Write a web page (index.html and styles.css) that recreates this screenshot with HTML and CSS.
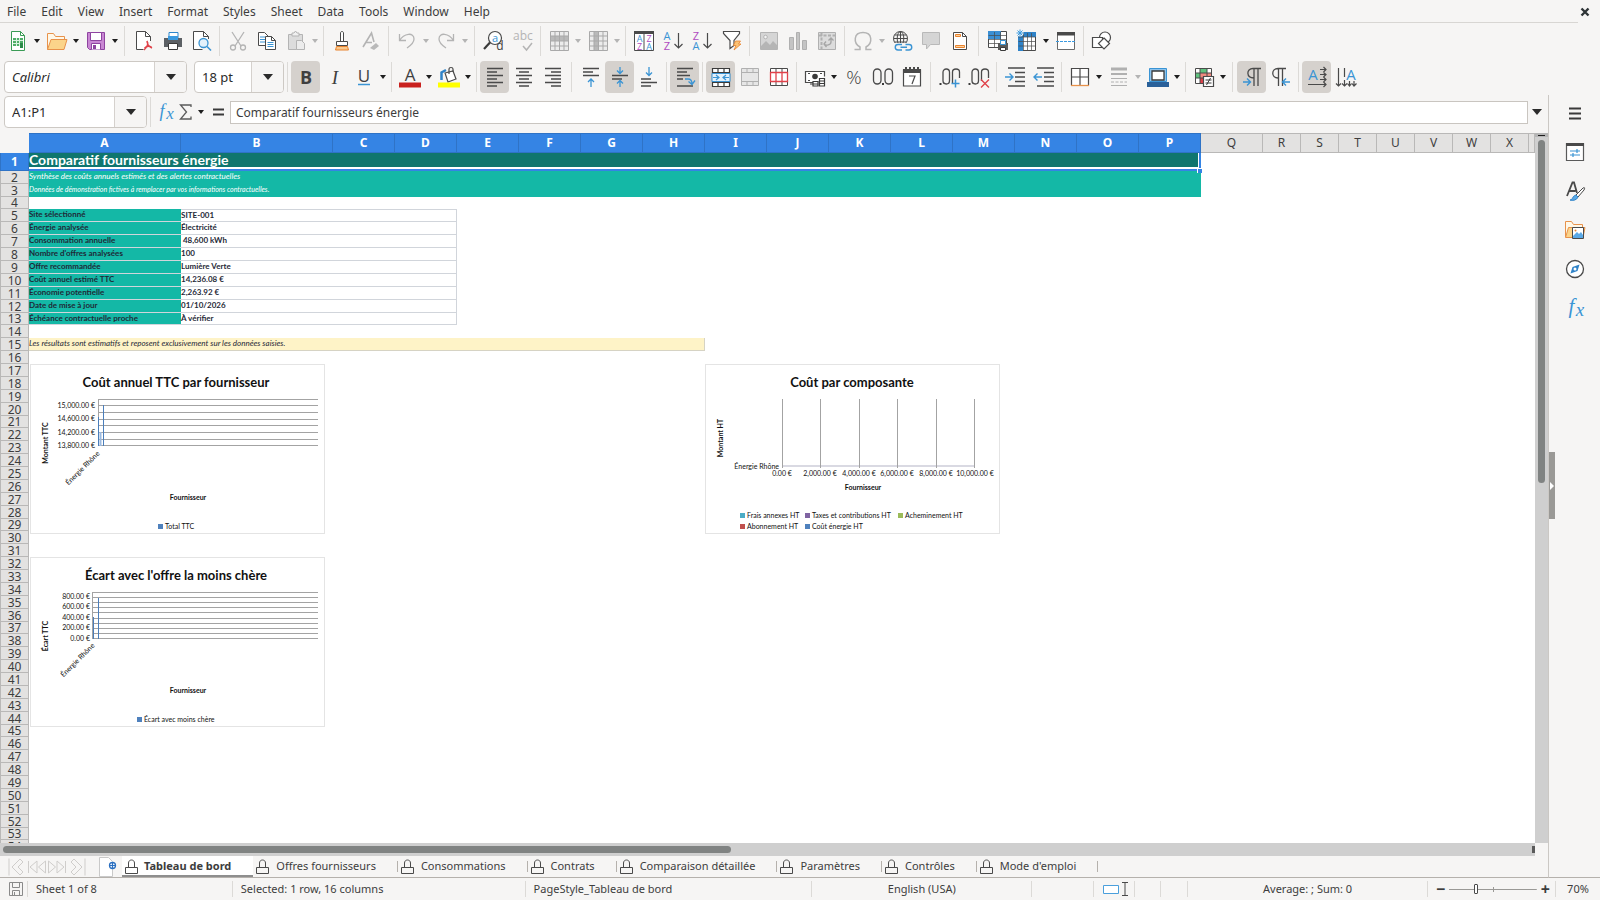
FILE: index.html
```html
<!DOCTYPE html>
<html lang="fr">
<head>
<meta charset="utf-8">
<title>Comparatif fournisseurs énergie</title>
<link rel="stylesheet" href="styles.css">
</head>
<body>
<header class="menubar">
  <nav class="menus">
    <button>File</button><button>Edit</button><button>View</button><button>Insert</button><button>Format</button><button>Styles</button><button>Sheet</button><button>Data</button><button>Tools</button><button>Window</button><button>Help</button>
  </nav>
  <button class="close" aria-label="Close document"><svg width="10" height="10" viewBox="0 0 10 10"><path d="M1.500 1.500l7 7M8.500 1.500l-7 7" stroke="#2e3436" stroke-width="2.400"/></svg></button>
</header>

<div class="toolbar" role="toolbar" aria-label="Standard">
  <button class="tb" aria-label="New"><svg viewBox="0 0 24 24"><path d="M5.500 2.500h9l4 4v15h-13z" fill="#fff" stroke="#3a9b55"/><path d="M14.500 2.500v4h4" fill="none" stroke="#3a9b55"/><path d="M7 9h10v8H7z" fill="#4fae68"/><path d="M7 11.500h10M7 14.500h10M10.500 9v8M13.500 9v8" stroke="#d9f2df"/><path d="M14 14h3v5h-3z" fill="#2b8a48"/></svg></button><button class="dd" aria-label="New options"></button>
  <button class="tb" aria-label="Open"><svg viewBox="0 0 24 24"><path d="M2.500 20.500V4.500h6l2 3h9v3" fill="#fff8e8" stroke="#e8924a"/><path d="M2.500 20.500l3.500-10h16l-3 10z" fill="#fbd48a" stroke="#e8924a"/></svg></button><button class="dd" aria-label="Open options"></button>
  <button class="tb" aria-label="Save"><svg viewBox="0 0 24 24"><path d="M3.500 3.500h17v17h-15l-2-2z" fill="#c987d3" stroke="#8e44a0"/><path d="M6.500 3.500h11v8h-11z" fill="#fff" stroke="#8e44a0"/><path d="M7.500 20.500v-6h9v6" fill="#fff" stroke="#8e44a0"/><path d="M9 16h3v4H9z" fill="#8e44a0"/></svg></button><button class="dd" aria-label="Save options"></button>
  <i class="sep wide"></i>
  <button class="tb" aria-label="Export as PDF"><svg viewBox="0 0 24 24"><path d="M18.500 12V7.500l-5-5h-9v18h7" fill="#fff" stroke="#4a4a4a"/><path d="M13.500 2.500v5h5" fill="none" stroke="#4a4a4a"/><path d="M15 12c2 3-1 7-3 9M15 12c0 4 3 6 5 7M12.500 19c2-2 5-2 7-1" fill="none" stroke="#e0424a" stroke-width="1.400"/></svg></button>
  <button class="tb" aria-label="Print"><svg viewBox="0 0 24 24"><path d="M8 10V3.500h9V10" fill="#fff" stroke="#2f87cc"/><path d="M3 9h18v9H3z" fill="#5c6064"/><path d="M7 7h10v4H7z" fill="#3b9ae0"/><path d="M7.500 14.500h9v6h-9z" fill="#fff" stroke="#3a3a3a"/></svg></button>
  <button class="tb" aria-label="Print preview"><svg viewBox="0 0 24 24"><path d="M18.500 10V7.500l-5-5h-10v18h9" fill="#fff" stroke="#4a4a4a"/><path d="M13.500 2.500v5h5" fill="none" stroke="#4a4a4a"/><circle cx="13.500" cy="14" r="4.500" fill="#e4f1fb" stroke="#3a94d4" stroke-width="1.300"/><path d="M17 17.500l4 4" stroke="#3a94d4" stroke-width="1.600"/></svg></button>
  <i class="sep"></i>
  <button class="tb off" aria-label="Cut"><svg viewBox="0 0 24 24"><g fill="none" stroke="#b4b4b4" stroke-width="1.300"><path d="M6 3l9 14M18 3L9 17"/><circle cx="7" cy="18.500" r="2.500"/><circle cx="17" cy="18.500" r="2.500"/></g></svg></button>
  <button class="tb" aria-label="Copy"><svg viewBox="0 0 24 24"><path d="M3.500 3.500h6l4 4v9h-10z" fill="#fff" stroke="#4a4a4a"/><path d="M5 8h5M5 10.500h5M5 13h5" stroke="#3a94d4"/><path d="M10.500 7.500h6l4 4v9h-10z" fill="#fff" stroke="#4a4a4a"/><path d="M16.500 7.500v4h4" fill="none" stroke="#4a4a4a"/><path d="M12.500 13.500h6M12.500 15.500h6M12.500 17.500h6" stroke="#3a94d4"/></svg></button>
  <button class="tb off" aria-label="Paste"><svg viewBox="0 0 24 24"><path d="M4.500 5.500h14v15h-14z" fill="#dcdcdc" stroke="#b4b4b4"/><path d="M8 7V4h2l1.500-2L13 4h2v3z" fill="#f0f0f0" stroke="#b4b4b4"/><path d="M12.500 11.500h5l3 3v6h-8z" fill="#ececec" stroke="#b4b4b4"/></svg></button><button class="dd off" aria-label="Paste options"></button>
  <i class="sep"></i>
  <button class="tb" aria-label="Clone formatting"><svg viewBox="0 0 24 24"><path d="M10.500 12V4c0-2 3-2 3 0v8" fill="#fff" stroke="#4a4a4a"/><path d="M6.500 12.500h11v4h-11z" fill="#fff" stroke="#4a4a4a"/><path d="M6.500 17.500h11l1 3.500h-13z" fill="#fbc98c" stroke="#e8832f"/></svg></button>
  <button class="tb off" aria-label="Clear formatting"><svg viewBox="0 0 24 24"><path d="M4 18L12.500 4l2.500 9M7 13.500h6" fill="none" stroke="#b4b4b4" stroke-width="1.600"/><path d="M11 19l6-5 3 3-5 4z" fill="#b9b9b9"/></svg></button>
  <i class="sep"></i>
  <button class="tb off" aria-label="Undo"><svg viewBox="0 0 24 24"><path d="M4.500 5v6.500H11M4.500 11.500C9 4 19 3 19 10c0 4-4 7-7 9" fill="none" stroke="#b4b4b4" stroke-width="1.300"/></svg></button><button class="dd off" aria-label="Undo list"></button>
  <button class="tb off" aria-label="Redo"><svg viewBox="0 0 24 24"><path d="M19.500 5v6.500H13M19.500 11.500C15 4 5 3 5 10c0 4 4 7 7 9" fill="none" stroke="#b4b4b4" stroke-width="1.300"/></svg></button><button class="dd off" aria-label="Redo list"></button>
  <i class="sep wide"></i>
  <button class="tb" aria-label="Find and replace"><svg viewBox="0 0 24 24"><circle cx="13" cy="9" r="6.500" fill="#fff" stroke="#4a4a4a" stroke-width="1.200"/><path d="M8 13.500L2 20" stroke="#3a3a3a" stroke-width="2.200"/><text x="13" y="13" class="gl blue" font-size="11">a</text><text x="18" y="21" class="gl b" font-size="12">d</text></svg></button>
  <button class="tb off" aria-label="Spelling"><svg viewBox="0 0 24 24"><text x="12" y="11" class="gl grey" font-size="12">abc</text><path d="M12 17l3.500 4L21 14" fill="none" stroke="#b4b4b4" stroke-width="1.500"/></svg></button>
  <i class="sep"></i>
  <button class="tb off" aria-label="Row"><svg viewBox="0 0 24 24"><path d="M3.500 2.500h18v19h-18z" fill="#ececec" stroke="#a9a9a9"/><path d="M4 7h17v5H4z" fill="#b9b9b9"/><path d="M3.500 7h18M3.500 12h18M3.500 17h18M8 3v18M12.500 3v18M17 3v18" stroke="#a9a9a9"/></svg></button><button class="dd off" aria-label="Row options"></button>
  <button class="tb off" aria-label="Column"><svg viewBox="0 0 24 24"><path d="M3.500 2.500h18v19h-18z" fill="#ececec" stroke="#a9a9a9"/><path d="M8 3h5v18H8z" fill="#b9b9b9"/><path d="M3.500 7h18M3.500 12h18M3.500 17h18M8 3v18M12.500 3v18M17 3v18" stroke="#a9a9a9"/></svg></button><button class="dd off" aria-label="Column options"></button>
  <i class="sep"></i>
  <button class="tb" aria-label="Sort"><svg viewBox="0 0 24 24"><path d="M2.500 3v18.500h19V3M12 4v17" fill="#fff" stroke="#4a4a4a"/><path d="M2 2h20v3H2z" fill="#4a4a4a"/><text x="7.500" y="12.500" class="gl blue" font-size="9">A</text><text x="7.500" y="20.500" class="gl pur" font-size="9">Z</text><text x="17" y="12.500" class="gl pur" font-size="9">Z</text><text x="17" y="20.500" class="gl blue" font-size="9">A</text></svg></button>
  <button class="tb" aria-label="Sort ascending"><svg viewBox="0 0 24 24"><text x="6" y="11" class="gl blue" font-size="11">A</text><text x="6" y="21" class="gl pur" font-size="11">Z</text><path d="M17.500 4v15M13.500 15l4 4 4-4" fill="none" stroke="#4a4a4a" stroke-width="1.200"/></svg></button>
  <button class="tb" aria-label="Sort descending"><svg viewBox="0 0 24 24"><text x="6" y="11" class="gl pur" font-size="11">Z</text><text x="6" y="21" class="gl blue" font-size="11">A</text><path d="M17.500 4v15M13.500 15l4 4 4-4" fill="none" stroke="#4a4a4a" stroke-width="1.200"/></svg></button>
  <button class="tb" aria-label="AutoFilter"><svg viewBox="0 0 24 24"><path d="M4.500 2.500h16v2l-5.500 7v5l-4 3v-8l-6.500-7z" fill="#fff" stroke="#4a4a4a" stroke-width="1.200"/><path d="M16.500 12h5l-2 3h2.500l-7 6 2-4.500h-2.500z" fill="#fbc274" stroke="#e8832f" stroke-width=".8"/></svg></button>
  <i class="sep wide"></i>
  <button class="tb off" aria-label="Insert image"><svg viewBox="0 0 24 24"><path d="M3.500 3.500h17v17h-17z" fill="#d5d5d5" stroke="#b4b4b4"/><circle cx="8.500" cy="8" r="1.800" fill="#f4f4f4" stroke="#b4b4b4"/><path d="M4 17l5-5 4 4 3-4 5 5v3H4z" fill="#b5b5b5"/></svg></button>
  <button class="tb off" aria-label="Insert chart"><svg viewBox="0 0 24 24"><g fill="#c4c4c4" stroke="#b0b0b0"><path d="M3.500 8.500h4v12h-4zM10.500 3.500h3v17h-3zM16.500 11.500h4v9h-4z"/></g></svg></button>
  <button class="tb off" aria-label="Insert pivot table"><svg viewBox="0 0 24 24"><path d="M3.500 3.500h17v17h-17z" fill="#dcdcdc" stroke="#b0b0b0"/><path d="M4 6.500h16M6.500 4v16" stroke="#b0b0b0" stroke-dasharray="3 1.500" stroke-width="2"/><path d="M16 9v4c0 3-5 4-7 2M13.500 11.500L16 9l2.500 2.500M11 12.500L9 15l2.500 3" fill="none" stroke="#a5a5a5" stroke-width="1.300"/></svg></button>
  <i class="sep"></i>
  <button class="tb off" aria-label="Special character"><svg viewBox="0 0 24 24"><path d="M3.500 20.500h5.500v-2.500C2 14 2.500 3.500 12 3.500S22 14 15 18v2.500h5.500" fill="none" stroke="#b4b4b4" stroke-width="1.500"/></svg></button><button class="dd off" aria-label="Special character options"></button>
  <button class="tb" aria-label="Hyperlink"><svg viewBox="0 0 24 24"><g fill="none" stroke="#4a4a4a"><circle cx="10.500" cy="9.500" r="7"/><ellipse cx="10.500" cy="9.500" rx="3.300" ry="7"/><path d="M3.500 9.500h14M4.500 6h12M4.500 13h12M10.500 2.500v14"/></g><path d="M5 14h18v8H5z" fill="#f6f5f4"/><g fill="none" stroke="#3a94d4" stroke-width="1.400"><path d="M12 15.500H8a2.500 2.500 0 000 5.500h4M15.500 15.500H19a2.500 2.500 0 010 5.500h-3.500M10.500 18.300h6.500"/></g></svg></button>
  <button class="tb off" aria-label="Comment"><svg viewBox="0 0 24 24"><path d="M3.500 3.500h17v12h-9l-4 4.500v-4.500h-4z" fill="#d5d5d5" stroke="#b9b9b9"/></svg></button>
  <button class="tb" aria-label="Headers and footers"><svg viewBox="0 0 24 24"><path d="M5.500 3.500h9l4 4v13h-13z" fill="#fff" stroke="#4a4a4a"/><path d="M14.500 3.500v4h4" fill="none" stroke="#4a4a4a"/><path d="M7.500 5.500h5v2h-5zM7.500 16.500h9v2h-9z" fill="#fbd3a0" stroke="#e8832f"/></svg></button>
  <i class="sep wide"></i>
  <button class="tb" aria-label="Print area"><svg viewBox="0 0 24 24"><path d="M2.500 2.500h18v16h-18z" fill="#fff" stroke="#4a4a4a"/><path d="M2 2h13v8H2z" fill="#3b8fd4"/><path d="M2.500 6.500h18M2.500 10.500h18M2.500 14.500h18M8.500 3v15M14.500 3v15" stroke="#4a4a4a" stroke-opacity=".7"/><path d="M12 14h10v7H12z" fill="#5a5a5a"/><path d="M14.500 11.500h5v4h-5z" fill="#fff" stroke="#3a94d4"/><path d="M14.500 18.500h5v3h-5z" fill="#fff" stroke="#3a3a3a"/></svg></button>
  <button class="tb" aria-label="Freeze rows and columns"><svg viewBox="0 0 24 24"><path d="M3.500 3.500h17v18h-17z" fill="#fff" stroke="#4a4a4a"/><path d="M3 3h18v5H3zM3 3h5v19H3z" fill="#2f83c8"/><path d="M3.500 8h17M3.500 12.500h17M3.500 17h17M8.500 4v18M12.500 4v18M16.500 4v18" stroke="#4a4a4a" stroke-opacity=".7"/><circle cx="5" cy="4" r="3.500" fill="#f6f5f4"/><path d="M5 .5v7M1.500 4h7M2.500 1.500l5 5M7.500 1.500l-5 5" stroke="#3b9ae0"/></svg></button><button class="dd" aria-label="Freeze options"></button>
  <button class="tb" aria-label="Split window"><svg viewBox="0 0 24 24"><path d="M3.500 3.500h17v17h-17z" fill="#fff" stroke="#6a6a6a"/><path d="M3 3h18v3.500H3z" fill="#4a4a4a"/><path d="M2 12.500h20" stroke="#3b9ae0" stroke-width="1.200" stroke-dasharray="3 1"/></svg></button>
  <i class="sep"></i>
  <button class="tb" aria-label="Show draw functions"><svg viewBox="0 0 24 24"><g fill="#fff" stroke="#4a4a4a" stroke-width="1.200"><circle cx="15" cy="8.500" r="5.500"/><path d="M2.500 8.500h10v10h-10z"/><path d="M14 9l5.500 5.500L14 20l-5.500-5.500z"/></g></svg></button>
</div>

<div class="toolbar format" role="toolbar" aria-label="Formatting">
  <div class="combo font"><input type="text" aria-label="Font name" value="Calibri"><button aria-label="Font list"></button></div>
  <div class="combo size"><input type="text" aria-label="Font size" value="18 pt"><button aria-label="Size list"></button></div>
  <i class="sep"></i>
  <button class="tb on" aria-label="Bold"><svg viewBox="0 0 24 24"><text x="12" y="18.500" class="gl bd" font-size="18">B</text></svg></button>
  <button class="tb" aria-label="Italic"><svg viewBox="0 0 24 24"><text x="12" y="18.500" class="gl it" font-size="19">I</text></svg></button>
  <button class="tb" aria-label="Underline"><svg viewBox="0 0 24 24"><text x="12" y="16.500" class="gl" font-size="17">U</text><path d="M6 19.500h12" stroke="#3a94d4" stroke-width="1.500"/></svg></button><button class="dd" aria-label="Underline options"></button>
  <i class="sep"></i>
  <button class="tb" aria-label="Font color"><svg viewBox="0 0 24 24"><text x="12" y="16" class="gl" font-size="17">A</text><path d="M1 17.500h22v5H1z" fill="#c9211e"/></svg></button><button class="dd" aria-label="Font color options"></button>
  <button class="tb" aria-label="Background color"><svg viewBox="0 0 24 24"><path d="M4.500 15V7.500L9 5" fill="none" stroke="#2f83c8" stroke-width="2.500"/><path d="M8 8l8-2 3 8-8 3z" fill="#fff" stroke="#4a4a4a" stroke-width="1.200"/><path d="M12 9V4c0-2 4-2 4 0v3" fill="none" stroke="#4a4a4a" stroke-width="1.200"/><path d="M1 17.500h22v5H1z" fill="#ff0"/></svg></button><button class="dd" aria-label="Background color options"></button>
  <i class="sep"></i>
  <button class="tb on" aria-label="Align left"><svg viewBox="0 0 24 24"><path d="M4 3.500h16M4 7h10M4 10.500h16M4 14h10M4 17.500h16M4 21h10" stroke="#4a4a4a" stroke-width="1.300"/></svg></button>
  <button class="tb" aria-label="Center"><svg viewBox="0 0 24 24"><path d="M4 3.500h16M7 7h10M4 10.500h16M7 14h10M4 17.500h16M7 21h10" stroke="#4a4a4a" stroke-width="1.300"/></svg></button>
  <button class="tb" aria-label="Align right"><svg viewBox="0 0 24 24"><path d="M4 3.500h16M10 7h10M4 10.500h16M10 14h10M4 17.500h16M10 21h10" stroke="#4a4a4a" stroke-width="1.300"/></svg></button>
  <i class="sep wide"></i>
  <button class="tb" aria-label="Align top"><svg viewBox="0 0 24 24"><path d="M4 3.500h16M4 7h10M4 10.500h16" stroke="#4a4a4a" stroke-width="1.300"/><path d="M12 22v-8M9 17l3-3 3 3" fill="none" stroke="#3a94d4" stroke-width="1.300"/></svg></button>
  <button class="tb on" aria-label="Center vertically"><svg viewBox="0 0 24 24"><path d="M4 10.500h16M4 14h10" stroke="#4a4a4a" stroke-width="1.300"/><path d="M12 2v6M9 5.500l3 3 3-3M12 22v-6M9 18.500l3-3 3 3" fill="none" stroke="#3a94d4" stroke-width="1.300"/></svg></button>
  <button class="tb" aria-label="Align bottom"><svg viewBox="0 0 24 24"><path d="M4 14h10M4 17.500h16M4 21h10" stroke="#4a4a4a" stroke-width="1.300"/><path d="M12 2v8M9 7.500l3 3 3-3" fill="none" stroke="#3a94d4" stroke-width="1.300"/></svg></button>
  <i class="sep"></i>
  <button class="tb on" aria-label="Wrap text"><svg viewBox="0 0 24 24"><path d="M4 3.500h16M4 7h10M4 10.500h13M4 14h6M4 21h16" stroke="#4a4a4a" stroke-width="1.300"/><path d="M12 14h3c3 0 4 2 4 5M15.500 16.500l3.500 3 3-4" fill="none" stroke="#3a94d4" stroke-width="1.300"/></svg></button>
  <i class="sep"></i>
  <button class="tb on" aria-label="Merge and center"><svg viewBox="0 0 24 24"><path d="M3.500 3.500h17v18h-17zM3.500 7.500h17M3.500 17.500h17M9 3.500v4M15 3.500v4M9 17.500v4M15 17.500v4" fill="#fff" stroke="#3a3a3a" stroke-width="1.200"/><path d="M3 8.500h18v8H3z" fill="#e4f1fb" stroke="#3a94d4"/><path d="M4 12.500h6M14 12.500h6M7 10l3 2.500L7 15M17 10l-3 2.500 3 2.500" fill="none" stroke="#3a94d4" stroke-width="1.200"/></svg></button>
  <button class="tb off" aria-label="Merge cells"><svg viewBox="0 0 24 24"><path d="M3.500 3.500h17v17h-17zM3.500 7.500h17M3.500 16.500h17M9 3.500v4M15 3.500v4M9 16.500v4M15 16.500v4" fill="#e6e6e6" stroke="#b0b0b0"/></svg></button>
  <button class="tb" aria-label="Unmerge cells"><svg viewBox="0 0 24 24"><path d="M3.500 3.500h17v17h-17zM3.500 7.500h17M3.500 16.500h17M9 3.500v4M15 3.500v4M9 16.500v4M15 16.500v4" fill="#fff" stroke="#4a4a4a"/><path d="M3.500 7.500h17v9h-17zM9 8v8M15 8v8" fill="#fff" stroke="#e0424a" stroke-width="1.300"/></svg></button>
  <i class="sep"></i>
  <button class="tb" aria-label="Currency"><svg viewBox="0 0 24 24"><path d="M12 17.500H2.500v-11h19v5" fill="#fff" stroke="#4a4a4a" stroke-width="1.200"/><circle cx="12" cy="11.500" r="2.800" fill="#3a3a3a"/><path d="M5 8.500h2M17 8.500h2M5 15.500h2" stroke="#4a4a4a"/><path d="M10 16.500h5v4.500h-5zM16.500 13.500h5v7.500h-5z" fill="#fff" stroke="#3a3a3a" stroke-width="1.200"/><path d="M16 16h6M16 18.500h6M7 19h8" stroke="#3a3a3a" stroke-width="1.200"/></svg></button><button class="dd" aria-label="Currency options"></button>
  <button class="tb" aria-label="Percent"><svg viewBox="0 0 24 24"><text x="12" y="19" class="gl light" font-size="19">%</text></svg></button>
  <button class="tb" aria-label="Number"><svg viewBox="0 0 24 24"><g fill="none" stroke="#4a4a4a" stroke-width="1.300"><rect x="2.500" y="4" width="7.500" height="15" rx="3.700"/><rect x="14" y="4" width="7.500" height="15" rx="3.700"/></g><path d="M11 18h2v2h-2z" fill="#3a3a3a"/></svg></button>
  <button class="tb" aria-label="Date"><svg viewBox="0 0 24 24"><path d="M3.500 5h17v16h-17z" fill="#fff" stroke="#4a4a4a" stroke-width="1.200"/><path d="M3 4h18v4H3zM5 2h2v3H5zM9 2h2v3H9zM13 2h2v3h-2zM17 2h2v3h-2z" fill="#4a4a4a"/><path d="M9 11h6l-3 8" fill="none" stroke="#4a4a4a" stroke-width="1.200"/></svg></button>
  <i class="sep wide"></i>
  <button class="tb" aria-label="Add decimal place"><svg viewBox="0 0 24 24"><g fill="none" stroke="#4a4a4a" stroke-width="1.300"><rect x="5" y="4" width="6.500" height="15" rx="3.200"/><path d="M14.500 18V7c0-4 7-4 7 0v6"/></g><path d="M1.500 18h2v2h-2z" fill="#3a3a3a"/><path d="M17.500 14.500v8M13.500 18.500h8" stroke="#3a94d4" stroke-width="1.500"/></svg></button>
  <button class="tb" aria-label="Delete decimal place"><svg viewBox="0 0 24 24"><g fill="none" stroke="#4a4a4a" stroke-width="1.300"><rect x="5" y="4" width="6.500" height="15" rx="3.200"/><path d="M14.500 16V7c0-4 7-4 7 0v6"/></g><path d="M1.500 18h2v2h-2z" fill="#3a3a3a"/><path d="M14 14.500l8 8M22 14.500l-8 8" stroke="#e0424a" stroke-width="1.400"/></svg></button>
  <i class="sep"></i>
  <button class="tb" aria-label="Increase indent"><svg viewBox="0 0 24 24"><path d="M5 3h17M12 7.500h10M12 12h10M12 16.500h10M5 21h17" stroke="#4a4a4a" stroke-width="1.300"/><path d="M2 12h8M6.500 8.500L10 12l-3.500 3.500" fill="none" stroke="#3a94d4" stroke-width="1.400"/></svg></button>
  <button class="tb" aria-label="Decrease indent"><svg viewBox="0 0 24 24"><path d="M5 3h17M12 7.500h10M12 12h10M12 16.500h10M5 21h17" stroke="#4a4a4a" stroke-width="1.300"/><path d="M10 12H2M5.500 8.500L2 12l3.500 3.500" fill="none" stroke="#3a94d4" stroke-width="1.400"/></svg></button>
  <i class="sep"></i>
  <button class="tb" aria-label="Borders"><svg viewBox="0 0 24 24"><path d="M3.500 20.500v-17h17v17M12 4v16M4 12h16" fill="#fff" stroke="#4a4a4a" stroke-width="1.200"/><path d="M3 20.500h18" stroke="#e8924a" stroke-width="1.300"/></svg></button><button class="dd" aria-label="Borders options"></button>
  <button class="tb off" aria-label="Border style"><svg viewBox="0 0 24 24"><path d="M4 4h16" stroke="#b0b0b0" stroke-width="3"/><path d="M4 9h16" stroke="#b0b0b0" stroke-width="2"/><path d="M4 13.500h16" stroke="#b0b0b0"/><path d="M4 17h16" stroke="#b0b0b0" stroke-dasharray="3 1.500"/><path d="M4 20.500h16" stroke="#b0b0b0"/></svg></button><button class="dd off" aria-label="Border style options"></button>
  <button class="tb" aria-label="Border color"><svg viewBox="0 0 24 24"><path d="M3.500 3.500h17v13h-17z" fill="#8cc3ee" stroke="#3a94d4"/><path d="M6 6h12v9H6z" fill="#fff" stroke="#3a3a3a" stroke-width="1.300"/><path d="M1 17h22v5H1z" fill="#2a6099"/></svg></button><button class="dd" aria-label="Border color options"></button>
  <i class="sep"></i>
  <button class="tb" aria-label="Conditional formatting"><svg viewBox="0 0 24 24"><path d="M3.500 3.500h16v15h-16z" fill="#fff" stroke="#4a4a4a"/><path d="M8 4h7v4H8z" fill="#5fc27e"/><path d="M8 8h11v5H8z" fill="#f08a80"/><path d="M4 8h4v5H4z" fill="#5fc27e"/><path d="M8 13h4v5H8z" fill="#e0424a"/><path d="M3.500 8h16M3.500 13h16M8 4v14M15 4v9" stroke="#4a4a4a"/><path d="M11.500 11.500h10v10h-10z" fill="#fff" stroke="#4a4a4a" stroke-width="1.200"/><path d="M13.500 15h6M13.500 18h6M18.500 13l-4 7" stroke="#3a3a3a"/></svg></button><button class="dd" aria-label="Conditional options"></button>
  <i class="sep wide"></i>
  <button class="tb on" aria-label="Left to right"><svg viewBox="0 0 24 24"><path d="M13 3.500h8M14 13C6 13 6 3.500 13 3.500M14 3.500v17.500M18 3.500v17.500" fill="none" stroke="#4a4a4a" stroke-width="1.300"/><path d="M3 17h7M7 13.500l3.500 3.500L7 20.500" fill="none" stroke="#3a94d4" stroke-width="1.400"/></svg></button>
  <button class="tb" aria-label="Right to left"><svg viewBox="0 0 24 24"><path d="M9 3.500h8M9 13C2 13 2 3.500 9 3.500M9.500 3.500v17.500M13.500 3.500v17.500" fill="none" stroke="#4a4a4a" stroke-width="1.300"/><path d="M21 17h-7M17 13.500L13.500 17l3.500 3.500" fill="none" stroke="#3a94d4" stroke-width="1.400"/></svg></button>
  <i class="sep"></i>
  <button class="tb on" aria-label="Text direction left to right"><svg viewBox="0 0 24 24"><text x="8" y="14.500" class="gl blue" font-size="15">A</text><path d="M15 4.500h6M15 9.500h6M15 14.500h6M3 19.500h18M18.500 2l2.500 2.500L18.500 7M18.500 7.500l2.500 2-2.500 2.500M18.500 12l2.500 2.500-2.500 2.500M18.500 17l2.500 2.500-2.500 2.500" fill="none" stroke="#4a4a4a" stroke-width="1.200"/></svg></button>
  <button class="tb" aria-label="Text direction top to bottom"><svg viewBox="0 0 24 24"><text x="17" y="14.500" class="gl blue" font-size="15">A</text><path d="M4.500 3v18M10.500 3v9M10.500 15v6M15.500 16v5M20 16v5M2 18.500L4.500 21 7 18.500M8 18.500l2.500 2.500 2.500-2.500M13.500 18.500l2 2.500 2-2.500M18 18.500l2 2.500 2.500-2.500" fill="none" stroke="#4a4a4a" stroke-width="1.200"/></svg></button>
</div>

<main class="workspace">
  <section class="document">
    <div class="formulabar">
      <div class="combo name"><input type="text" aria-label="Name box" value="A1:P1"><button aria-label="Named ranges"></button></div>
      <i class="sep"></i>
      <button class="fb" aria-label="Function wizard"><svg class="fx" viewBox="0 0 20 20"><text x="6" y="15" class="gl fxg" font-size="18">f</text><text x="14" y="17" class="gl fxg" font-size="17">x</text></svg></button>
      <button class="fb" aria-label="Select function"><svg class="fx" viewBox="0 0 20 20"><path d="M15 5V3H4.500l6 7-6 7H15v-2.500" fill="none" stroke="#5a5a5a" stroke-width="1.300"/></svg></button><button class="dd" aria-label="Function list"></button>
      <button class="fb eq" aria-label="Formula"><svg class="fx" viewBox="0 0 20 20"><path d="M5 7.500h11M5 12.500h11" stroke="#3a3a3a" stroke-width="2"/></svg></button>
      <input class="formula" type="text" aria-label="Formula input" value="Comparatif fournisseurs énergie">
      <button class="expand" aria-label="Expand formula bar"></button>
    </div>

    <div class="sheetarea">
      <div class="sheet">
        <table>
          <colgroup><col class="c-h"><col class="c-w"><col class="c-w"><col class="c-m" span="15"><col class="c-s" span="7"><col></colgroup>
          <thead><tr><th class="corner"></th><th class="sel">A</th><th class="sel">B</th><th class="sel">C</th><th class="sel">D</th><th class="sel">E</th><th class="sel">F</th><th class="sel">G</th><th class="sel">H</th><th class="sel">I</th><th class="sel">J</th><th class="sel">K</th><th class="sel">L</th><th class="sel">M</th><th class="sel">N</th><th class="sel">O</th><th class="sel">P</th><th>Q</th><th>R</th><th>S</th><th>T</th><th>U</th><th>V</th><th>W</th><th>X</th><th></th></tr></thead>
          <tbody>
            <tr class="r1"><th class="sel">1</th><td class="title" colspan="16">Comparatif fournisseurs énergie<span class="handle"></span></td></tr>
            <tr><th>2</th><td class="sub" colspan="16">Synthèse des coûts annuels estimés et des alertes contractuelles</td></tr>
            <tr><th>3</th><td class="sub small" colspan="16">Données de démonstration fictives à remplacer par vos informations contractuelles.</td></tr>
            <tr class="r4"><th>4</th></tr>
            <tr class="first"><th>5</th><td class="key">Site sélectionné</td><td class="val" colspan="3">SITE-001</td></tr>
            <tr><th>6</th><td class="key">Énergie analysée</td><td class="val" colspan="3">Électricité</td></tr>
            <tr><th>7</th><td class="key">Consommation annuelle</td><td class="val" colspan="3">&nbsp;48,600 kWh</td></tr>
            <tr><th>8</th><td class="key">Nombre d'offres analysées</td><td class="val" colspan="3">100</td></tr>
            <tr><th>9</th><td class="key">Offre recommandée</td><td class="val" colspan="3">Lumière Verte</td></tr>
            <tr><th>10</th><td class="key">Coût annuel estimé TTC</td><td class="val" colspan="3">14,236.08 €</td></tr>
            <tr><th>11</th><td class="key">Économie potentielle</td><td class="val" colspan="3">2,263.92 €</td></tr>
            <tr><th>12</th><td class="key">Date de mise à jour</td><td class="val" colspan="3">01/10/2026</td></tr>
            <tr><th>13</th><td class="key">Échéance contractuelle proche</td><td class="val" colspan="3">À vérifier</td></tr>
            <tr><th>14</th></tr>
            <tr><th>15</th><td class="note" colspan="8">Les résultats sont estimatifs et reposent exclusivement sur les données saisies.</td></tr>
            <tr><th>16</th></tr><tr><th>17</th></tr><tr><th>18</th></tr><tr><th>19</th></tr><tr><th>20</th></tr>
            <tr><th>21</th></tr><tr><th>22</th></tr><tr><th>23</th></tr><tr><th>24</th></tr><tr><th>25</th></tr>
            <tr><th>26</th></tr><tr><th>27</th></tr><tr><th>28</th></tr><tr><th>29</th></tr><tr><th>30</th></tr>
            <tr><th>31</th></tr><tr><th>32</th></tr><tr><th>33</th></tr><tr><th>34</th></tr><tr><th>35</th></tr>
            <tr><th>36</th></tr><tr><th>37</th></tr><tr><th>38</th></tr><tr><th>39</th></tr><tr><th>40</th></tr>
            <tr><th>41</th></tr><tr><th>42</th></tr><tr><th>43</th></tr><tr><th>44</th></tr><tr><th>45</th></tr>
            <tr><th>46</th></tr><tr><th>47</th></tr><tr><th>48</th></tr><tr><th>49</th></tr><tr><th>50</th></tr>
            <tr><th>51</th></tr><tr><th>52</th></tr><tr><th>53</th></tr><tr><th>54</th></tr>
          </tbody>
        </table>

        <svg class="chart one" viewBox="0 0 295 170">
          <rect x=".5" y=".5" width="294" height="169" class="frame"/>
          <text x="146" y="23" class="ct mid">Coût annuel TTC par fournisseur</text>
          <path class="grid" d="M68 35.500h220M68 41.500h220M68 48.500h220M68 55.500h220M68 61.500h220M68 68.500h220M68 75.500h220M68 81.500h220M68.500 35v47"/>
          <path d="M68.500 53v29M73.500 41v41" stroke="#4a7ebb"/><path d="M70.500 68v14" stroke="#9dbbe0" stroke-width="2"/>
          <g class="lab end"><text x="65" y="44">15,000.00 €</text><text x="65" y="57">14,600.00 €</text><text x="65" y="71">14,200.00 €</text><text x="65" y="84">13,800.00 €</text>
          <text transform="translate(70 90) rotate(-45)">Énergie Rhône</text></g>
          <text class="ax mid" transform="translate(18 79) rotate(-90)">Montant TTC</text>
          <text class="ax mid" x="158" y="136">Fournisseur</text>
          <path d="M128 160h5v5h-5z" fill="#4f81bd"/><text class="lab" x="135" y="165">Total TTC</text>
        </svg>

        <svg class="chart two" viewBox="0 0 295 170">
          <rect x=".5" y=".5" width="294" height="169" class="frame"/>
          <text x="147" y="23" class="ct mid">Coût par composante</text>
          <path d="M77 102h192" stroke="#d9d9e2" stroke-width="2"/>
          <path class="grid" d="M77.500 35v69M115.500 35v69M154.500 35v69M192.500 35v69M231.500 35v69M269.500 35v69"/>
          <text class="lab end" x="74" y="105">Énergie Rhône</text>
          <g class="lab mid"><text x="77" y="112">0.00 €</text><text x="115" y="112">2,000.00 €</text><text x="154" y="112">4,000.00 €</text><text x="192" y="112">6,000.00 €</text><text x="231" y="112">8,000.00 €</text><text x="270" y="112">10,000.00 €</text></g>
          <text class="ax mid" transform="translate(18 74) rotate(-90)">Montant HT</text>
          <text class="ax mid" x="158" y="126">Fournisseur</text>
          <path d="M35 149h5v5h-5z" fill="#4bacc6"/><path d="M100 149h5v5h-5z" fill="#8064a2"/><path d="M193 149h5v5h-5z" fill="#9bbb59"/><path d="M35 160h5v5h-5z" fill="#c0504d"/><path d="M100 160h5v5h-5z" fill="#4f81bd"/>
          <g class="lab"><text x="42" y="154">Frais annexes HT</text><text x="107" y="154">Taxes et contributions HT</text><text x="200" y="154">Acheminement HT</text><text x="42" y="165">Abonnement HT</text><text x="107" y="165">Coût énergie HT</text></g>
        </svg>

        <svg class="chart three" viewBox="0 0 295 170">
          <rect x=".5" y=".5" width="294" height="169" class="frame"/>
          <text x="146" y="23" class="ct mid">Écart avec l'offre la moins chère</text>
          <path class="grid" d="M62 35.500h226M62 40.500h226M62 45.500h226M62 50.500h226M62 55.500h226M62 61.500h226M62 66.500h226M62 71.500h226M62 76.500h226M62 81.500h226M62.500 35v47"/>
          <path d="M63.500 60v22M68.500 41v41" stroke="#4a7ebb"/>
          <g class="lab end"><text x="60" y="42">800.00 €</text><text x="60" y="52">600.00 €</text><text x="60" y="63">400.00 €</text><text x="60" y="73">200.00 €</text><text x="60" y="84">0.00 €</text>
          <text transform="translate(65 89) rotate(-45)">Énergie Rhône</text></g>
          <text class="ax mid" transform="translate(18 79) rotate(-90)">Écart TTC</text>
          <text class="ax mid" x="158" y="136">Fournisseur</text>
          <path d="M107 160h5v5h-5z" fill="#4f81bd"/><text class="lab" x="114" y="165">Écart avec moins chère</text>
        </svg>
      </div>
      <div class="vscroll"><span class="vthumb"></span></div>
    </div>

    <div class="hrow"><div class="hscroll"><span class="hthumb"></span><span class="hend"></span></div></div>

    <div class="tabs">
      <div class="navs">
        <button aria-label="First sheet"><svg viewBox="0 0 20 20"><path d="M2 1.500v17M5 10l8-8 3 3-5 5 5 5-3 3z"/></svg></button><button aria-label="Previous sheet"><svg viewBox="0 0 20 20"><path d="M1.500 4v12M10 4v12l-7-6zM18.500 4v12l-7-6z"/></svg></button><button aria-label="Next sheet"><svg viewBox="0 0 20 20"><path d="M1.500 4v12l7-6zM10 4v12l7-6zM18.500 4v12"/></svg></button><button aria-label="Last sheet"><svg viewBox="0 0 20 20"><path d="M18 1.500v17M15 10L7 2 4 5l5 5-5 5 3 3z"/></svg></button>
      </div>
      <button class="newsheet" aria-label="Add sheet"><svg viewBox="0 0 20 21"><path d="M1.500 1.500h9l4 4v15h-13z" fill="#fff" stroke="#c9c9c9"/><circle cx="14.500" cy="9.500" r="3" fill="#fff" stroke="#2a6fc0" stroke-width="1.300"/><path d="M14.500 6v7M11 9.500h7" stroke="#2a6fc0" stroke-width="1.200"/></svg></button>
      <button class="tab active"><svg viewBox="0 0 13 15"><path d="M3.500 8V4c0-4 6-4 6 0v4M.5 8.500h12v6H.5z"/></svg>Tableau de bord</button>
      <button class="tab"><svg viewBox="0 0 13 15"><path d="M3.500 8V4c0-4 6-4 6 0v4M.5 8.500h12v6H.5z"/></svg>Offres fournisseurs</button>
      <button class="tab"><svg viewBox="0 0 13 15"><path d="M3.500 8V4c0-4 6-4 6 0v4M.5 8.500h12v6H.5z"/></svg>Consommations</button>
      <button class="tab"><svg viewBox="0 0 13 15"><path d="M3.500 8V4c0-4 6-4 6 0v4M.5 8.500h12v6H.5z"/></svg>Contrats</button>
      <button class="tab"><svg viewBox="0 0 13 15"><path d="M3.500 8V4c0-4 6-4 6 0v4M.5 8.500h12v6H.5z"/></svg>Comparaison détaillée</button>
      <button class="tab"><svg viewBox="0 0 13 15"><path d="M3.500 8V4c0-4 6-4 6 0v4M.5 8.500h12v6H.5z"/></svg>Paramètres</button>
      <button class="tab"><svg viewBox="0 0 13 15"><path d="M3.500 8V4c0-4 6-4 6 0v4M.5 8.500h12v6H.5z"/></svg>Contrôles</button>
      <button class="tab"><svg viewBox="0 0 13 15"><path d="M3.500 8V4c0-4 6-4 6 0v4M.5 8.500h12v6H.5z"/></svg>Mode d'emploi</button>
    </div>
  </section>

  <aside class="sidebar">
    <span class="grip"></span>
    <button aria-label="Sidebar settings"><svg viewBox="0 0 24 24"><path d="M6 7.500h12M6 12.500h12M6 17.500h12" stroke="#3a3a3a" stroke-width="1.800"/></svg></button>
    <button aria-label="Properties"><svg viewBox="0 0 24 24"><path d="M3.500 3.500h17v17h-17z" fill="#fff" stroke="#5a5a5a" stroke-width="1.200"/><path d="M3 3h18v3H3z" fill="#4a4a4a"/><path d="M7 11h10M7 15h10M14 9v4M10 13v4" stroke="#3a94d4" stroke-width="1.200"/></svg></button>
    <button aria-label="Styles"><svg viewBox="0 0 24 24"><path d="M4 17L9.500 3.500h1.500L14 14M6.500 12h6" fill="none" stroke="#4a4a4a" stroke-width="1.800"/><path d="M13 16l7-7c2-1 2 0 1 2l-6 7z" fill="#fff" stroke="#4a4a4a"/><path d="M7 21c3 0 2-4 6-5l2 2c-1 3-5 4-8 3z" fill="#5aa9e6" stroke="#2f83c8"/></svg></button>
    <button aria-label="Gallery"><svg viewBox="0 0 24 24"><path d="M2.500 19V3.500h6l2 3h9v3" fill="#fff8e8" stroke="#e8924a"/><path d="M2.500 19.500l3-10h16.500l-2 10z" fill="#fbd48a" stroke="#e8924a"/><path d="M9.500 9.500h11v11h-11z" fill="#fff" stroke="#4a4a4a"/><path d="M10 18l4-4 2 2 2-2 2 3v3H10z" fill="#5aa9e6"/><circle cx="12.500" cy="12.500" r="1" fill="#e8832f"/></svg></button>
    <button aria-label="Navigator"><svg viewBox="0 0 24 24"><circle cx="12" cy="12" r="8.500" fill="#fff" stroke="#4a4a4a" stroke-width="1.300"/><path d="M16.500 7.500l-2 6.500-7 2.500 2-6.500z" fill="#2f83c8"/><circle cx="12" cy="12" r="1.500" fill="#fff"/></svg></button>
    <button aria-label="Functions"><svg viewBox="0 0 24 24"><text x="8.500" y="17" class="gl fxg" font-size="21">f</text><text x="17" y="20" class="gl fxg" font-size="19">x</text></svg></button>
  </aside>
</main>

<footer class="status">
  <span><svg class="disk" viewBox="0 0 16 16"><path d="M1.500 1.500h13v13h-13zM4.500 1.500v5h7v-5M4.500 14.500v-5h7v5M6.500 11v3" fill="none" stroke="#8a8a8a"/></svg></span>
  <span class="t">Sheet 1 of 8</span>
  <span class="t">Selected: 1 row, 16 columns</span>
  <span class="t">PageStyle_Tableau de bord</span>
  <span class="t c">English (USA)</span>
  <span></span>
  <span><svg class="mode" viewBox="0 0 28 16"><path d="M1.500 4.500h15v8h-15z" fill="#fff" stroke="#4a9fdc"/><path d="M20 1.500h6M20 14.500h6M23 1.500v13" stroke="#4a4a4a"/></svg></span>
  <span></span><span></span>
  <span class="t c">Average: ; Sum: 0</span>
  <span class="zoom"><button aria-label="Zoom out">−</button><input type="range" min="20" max="600" value="190" aria-label="Zoom"><button aria-label="Zoom in">+</button></span>
  <span class="t c last">70%</span>
</footer>
</body>
</html>
```
FILE: styles.css
```css
* { box-sizing: border-box; }
html, body { height: 100%; margin: 0; }
body {
  display: flex;
  flex-direction: column;
  background: #f6f5f4;
  color: #3d3d3d;
  font: 12px/16px "Noto Sans", sans-serif;
  overflow: hidden;
}
button, input { font: inherit; color: inherit; margin: 0; padding: 0; border: 0; background: none; }
button { display: block; flex: none; }
input { min-width: 0; outline: 0; }
svg { display: block; }

.menubar { display: flex; height: 23px; flex: none; justify-content: space-between; }
.menus { display: flex; flex: 1; border-bottom: 1px solid #d8d6d3; }
.menus button { padding: 1px 8px 0 7px; }
.close { width: 22px; display: grid; place-items: center start; padding-left: 2px; }

.toolbar { display: flex; flex: none; height: 35px; align-items: center; padding-left: 3px; }
.toolbar.format { height: 37px; padding-left: 4px; }
.tb { width: 29px; height: 32px; border-radius: 4px; display: grid; place-items: center; }
.tb svg { width: 24px; height: 24px; }
.tb.on { background: #d5d1cd; }
.dd { width: 10px; height: 32px; display: grid; place-items: center; }
.dd::before, .combo button::before, .expand::before {
  content: "";
  border: solid transparent;
  border-width: 4px 3px 0;
  border-top-color: #1e1e1e;
}
.dd.off::before { border-top-color: #b4b4b4; }
.sep { flex: none; width: 1px; height: 30px; margin: 0 3px; background: #dcdad7; }
.sep.wide { margin: 0 4px; }

.gl { font-family: "Open Sans", sans-serif; fill: #3f3f3f; text-anchor: middle; }
.gl.blue { fill: #3a94d4; }
.gl.pur { fill: #b04bc0; }
.gl.grey { fill: #b4b4b4; }
.gl.bd { font-weight: 700; }
.gl.light { font-weight: 300; }
.gl.it { font-family: "Liberation Serif", serif; font-style: italic; }
.gl.fxg { font-family: "Liberation Serif", serif; font-style: italic; fill: #3a94d4; }

.combo { display: flex; flex: none; height: 32px; border: 1px solid #cdc9c4; border-radius: 4px; background: #fff; overflow: hidden; color: #2b2b2b; }
.combo input { flex: 1; padding-left: 7px; }
.combo button { width: 32px; border-left: 1px solid #d5d1cd; background: #f6f5f4; display: grid; place-items: center; }
.combo button::before, .expand::before { border-width: 6px 5px 0; border-top-color: #2b2b2b; }
.combo.font { width: 183px; margin-right: 7px; }
.combo.font input { font-style: italic; }
.combo.font input, .combo.size input, .combo.name input { font-size: 13px; }
.combo.size { width: 90px; }
.combo.name { width: 143px; }

.workspace { display: flex; flex: 1; min-height: 0; }
.document { flex: 1; min-width: 0; display: flex; flex-direction: column; }

.formulabar { display: flex; flex: none; height: 38px; align-items: center; padding: 0 0 4px 4px; }
.fb { width: 20px; height: 24px; display: grid; place-items: center; }
.formulabar > .sep { margin: 0 5px 0 3px; }
.fx { width: 20px; height: 20px; }
.eq { width: 24px; }
.formula { flex: 1; height: 23px; border: 1px solid #c9c5c0; background: #fff; padding-left: 5px; }
.expand { width: 20px; height: 24px; display: grid; place-items: center; padding-right: 3px; }

.sheetarea { display: flex; flex: 1; min-height: 0; }
.sheet { position: relative; flex: 1; min-width: 0; background: #fff; overflow: hidden; }
table { width: 100%; table-layout: fixed; border-collapse: separate; border-spacing: 0; }
.c-h { width: 29px; }
.c-w { width: 152px; }
.c-m { width: 62px; }
.c-s { width: 38px; }
th, td { padding: 0; white-space: nowrap; }
thead th { height: 20px; background: #e3e2e1; border: solid #b9b8b7; border-width: 1px 1px 1px 0; font-weight: 400; line-height: 16px; }
thead th.sel { background: #3584e4; border-color: #2f73c6; color: #fff; font-weight: 700; }
thead th.corner { background: #f6f5f4; border-color: #f6f5f4; }
tbody tr { height: 13px; }
tbody tr:nth-child(8n+5), tbody .r4 { height: 12px; }
tbody tr.first { height: 13px; }
tbody .r1 { height: 18px; }
tbody th { background: #e3e2e1; border: solid #b9b8b7; border-width: 0 1px 1px; font-weight: 400; line-height: 11px; }
tbody th.sel { background: #3584e4; border-color: #2f73c6; color: #fff; font-weight: 700; }
td { font-family: Lato, sans-serif; font-size: 8px; line-height: 10px; vertical-align: top; }
.title { position: relative; background: #0f766e; color: #fff; font-size: 14px; font-weight: 700; line-height: 14px; border: solid #3584e4; border-width: 0 2px 2px 0; box-shadow: inset -1px -2px #fff; }
.handle { position: absolute; right: -3px; bottom: -4px; width: 5px; height: 5px; background: #3584e4; border: solid #fff; border-width: 1px 0 0 1px; }
.sub { background: #14b8a6; color: #fff; font-style: italic; }
.sub.small { font-size: 7px; }
.key, .val { font-weight: 700; border-bottom: 1px solid #d1d5db; color: #1f2937; }
.key { background: #14b8a6; }
.val { border-right: 1px solid #d1d5db; }
.first .val { border-top: 1px solid #d1d5db; }
.note { background: #fef3c7; border: solid #d6d3c4; border-width: 0 1px 1px 0; font-style: italic; color: #1f2937; }

.chart { position: absolute; width: 295px; height: 170px; background: #fff; }
.one { left: 30px; top: 231px; }
.two { left: 705px; top: 231px; }
.three { left: 30px; top: 424px; }
.chart text { font-family: Lato, sans-serif; fill: #111; }
.frame { fill: none; stroke: #e4e4e4; }
.grid { fill: none; stroke: #a3a3a3; }
.ct { font-size: 13px; font-weight: 700; }
.lab { font-size: 7px; }
.ax { font-size: 7px; font-weight: 700; }
.mid { text-anchor: middle; }
.end { text-anchor: end; }

.vscroll { flex: none; width: 13px; background: linear-gradient(#1e1e1e, #1e1e1e) 50% 2px / 7px 1px no-repeat, linear-gradient(#b5b5b5 4px, #cfcfcf 4px); padding: 7px 3px 3px; }
.vthumb { display: block; height: 49%; border-radius: 4px; background: #808382; }
.hrow { flex: none; padding-right: 13px; }
.hscroll { display: flex; justify-content: space-between; height: 13px; background: #cfcfcf; padding: 3px 0 3px 3px; }
.hthumb { width: 47.5%; border-radius: 4px; background: #808382; }
.hend { width: 3px; background: #5a5a5a; }

.tabs { display: flex; flex: none; height: 22px; border-bottom: 1px solid #b5b1ac; font-size: 11px; }
.navs { display: flex; padding-left: 7px; width: 98px; }
.navs button { width: 20px; }
.navs svg { width: 20px; height: 20px; fill: none; stroke: #cfcdcb; }
.newsheet { width: 24px; }
.newsheet svg { width: 20px; height: 21px; }
.tab { position: relative; padding: 0 22px 2px 23px; }
.tab::after { content: ""; position: absolute; right: 0; top: 5px; height: 11px; border-right: 1px solid #b5b1ac; }
.tab svg { position: absolute; left: 3px; top: 3px; width: 13px; height: 15px; fill: none; stroke: #4a4a4a; }
.tab.active { padding: 0 22px; background: #fff; font-weight: 700; border-bottom: 2px solid #8e8e8e; }
.tab.active::after { display: none; }

.sidebar { position: relative; flex: none; width: 52px; border-left: 1px solid #cbc8c4; border-bottom: 1px solid #b5b1ac; padding: 6px 0 0 1px; display: flex; flex-direction: column; align-items: center; gap: 15px; }
.sidebar button svg { width: 24px; height: 24px; }
.grip { position: absolute; left: 0; top: 357px; width: 6px; height: 67px; background: #9a9996; display: grid; place-items: center; }
.grip::before { content: ""; border: solid transparent; border-width: 4px 0 4px 4px; border-left-color: #fff; }

.status { flex: none; height: 22px; display: grid; grid-template-columns: 28px 205fr 293fr 287fr 220fr 62px 41px 26px 27px 240fr 128px 44px; align-items: center; font-size: 11px; }
.status > span { height: 16px; border-right: 1px solid #dcdad7; padding-left: 8px; white-space: nowrap; }
.status .c { text-align: center; padding: 0; }
.status .last { border: 0; }
.disk, .mode { height: 16px; }
.status .zoom { display: flex; align-items: center; gap: 4px; padding-right: 5px; }
.zoom button { font-size: 16px; font-weight: 700; line-height: 14px; }
.zoom input { appearance: none; flex: 1; height: 14px; background: linear-gradient(#9a9996, #9a9996) center / 100% 1px no-repeat, linear-gradient(#9a9996, #9a9996) center / 1px 5px no-repeat; }
.zoom input::-webkit-slider-thumb { appearance: none; width: 4px; height: 10px; background: #fff; border: 1px solid #4a4a4a; border-radius: 1px; }
```
